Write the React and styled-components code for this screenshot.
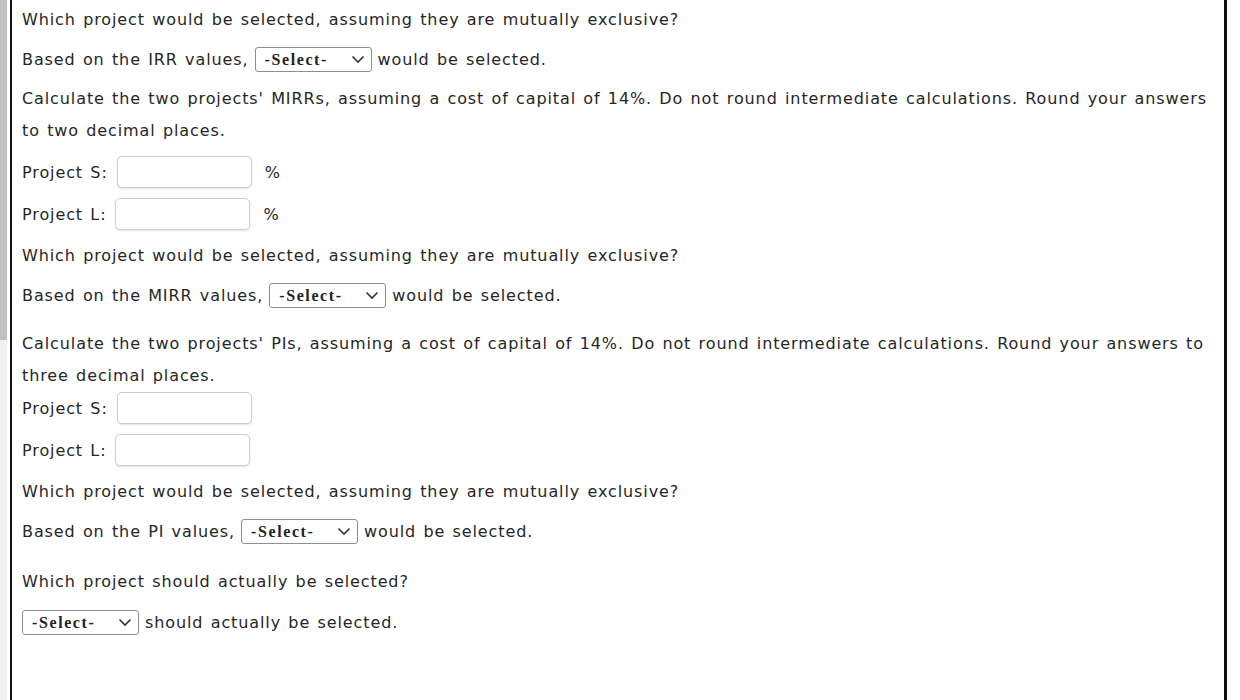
import React from 'react';
import styled, { createGlobalStyle } from 'styled-components';

const GlobalStyle = createGlobalStyle`
  html, body {
    margin: 0;
    padding: 0;
    background: #fff;
  }
  body {
    width: 1240px;
    height: 700px;
    overflow: hidden;
  }
`;

const Frame = styled.div`
  display: flex;
  height: 700px;
  width: 1240px;
`;

const Track = styled.div`
  width: 7px;
  background: #f0f0f0;
  display: flex;
  flex-direction: column;
`;

const Thumb = styled.div`
  height: 340px;
  background: #c1c1c1;
`;

const Gutter = styled.div`
  width: 3px;
  background: #fff;
`;

const Panel = styled.div`
  flex: 0 0 1217px;
  box-sizing: border-box;
  border-left: 2px solid #111;
  border-right: 3px solid #111;
  padding: 7px 0 0 10px;
  font-family: "DejaVu Sans", Verdana, sans-serif;
  font-size: 16px;
  letter-spacing: 0.9px;
  word-spacing: 1.3px;
  color: #262626;
`;

const Line = styled.div`
  display: flex;
  align-items: center;
  height: ${p => p.h || 24}px;
  margin-top: ${p => p.mt || 0}px;
  white-space: pre;
`;

const Para = styled.div`
  line-height: 32px;
  margin-top: ${p => p.mt || 0}px;
  padding-right: 10px;
`;

const SelectWrap = styled.div`
  position: relative;
  width: 117px;
  height: 25px;
  margin: 0 6px 0 ${p => (p.first ? 0 : 6)}px;
`;

const Select = styled.select`
  appearance: none;
  box-sizing: border-box;
  width: 100%;
  height: 100%;
  border: 1px solid #8f8f8f;
  border-radius: 3px;
  background: #fff;
  padding: 0 0 0 9px;
  font-family: "Liberation Serif", "Times New Roman", serif;
  font-weight: bold;
  font-size: 16px;
  letter-spacing: 1.6px;
  color: #222;
`;

const Chevron = styled.svg`
  position: absolute;
  right: 7px;
  top: 8px;
  pointer-events: none;
`;

const Input = styled.input`
  box-sizing: border-box;
  width: 135px;
  height: 32px;
  border: 1px solid #cfcfcf;
  border-radius: 5px;
  box-shadow: 0 1px 2px rgba(0, 0, 0, 0.12);
  margin-left: 9px;
  padding: 0 6px;
  font-size: 15px;
`;

const Unit = styled.span`
  margin-left: 13px;
`;

function Dropdown({ first }) {
  return (
    <SelectWrap first={first}>
      <Select defaultValue="">
        <option value="">-Select-</option>
        <option>Project S</option>
        <option>Project L</option>
      </Select>
      <Chevron width="14" height="9" viewBox="0 0 14 9">
        <path d="M1.5 1.5 L7 7 L12.5 1.5" fill="none" stroke="#333" strokeWidth="1.6" />
      </Chevron>
    </SelectWrap>
  );
}

function ProjectRow({ label, unit, mt }) {
  return (
    <Line h={32} mt={mt}>
      {label}
      <Input type="text" />
      {unit && <Unit>%</Unit>}
    </Line>
  );
}

export default function App() {
  return (
    <>
      <GlobalStyle />
      <Frame>
        <Track><Thumb /></Track>
        <Gutter />
        <Panel>
          <Line>Which project would be selected, assuming they are mutually exclusive?</Line>
          <Line h={25} mt={16}>Based on the IRR values,<Dropdown />would be selected.</Line>
          <Para mt={11}>
            Calculate the two projects' MIRRs, assuming a cost of capital of 14%. Do not round intermediate calculations. Round your answers to two decimal places.
          </Para>
          <ProjectRow label="Project S:" unit mt={9} />
          <ProjectRow label="Project L:" unit mt={10} />
          <Line mt={13}>Which project would be selected, assuming they are mutually exclusive?</Line>
          <Line h={25} mt={16}>Based on the MIRR values,<Dropdown />would be selected.</Line>
          <Para mt={20}>
            Calculate the two projects' PIs, assuming a cost of capital of 14%. Do not round intermediate calculations. Round your answers to three decimal places.
          </Para>
          <ProjectRow label="Project S:" mt={0} />
          <ProjectRow label="Project L:" mt={10} />
          <Line mt={13}>Which project would be selected, assuming they are mutually exclusive?</Line>
          <Line h={25} mt={16}>Based on the PI values,<Dropdown />would be selected.</Line>
          <Line mt={25}>Which project should actually be selected?</Line>
          <Line h={25} mt={17}><Dropdown first />should actually be selected.</Line>
        </Panel>
      </Frame>
    </>
  );
}
